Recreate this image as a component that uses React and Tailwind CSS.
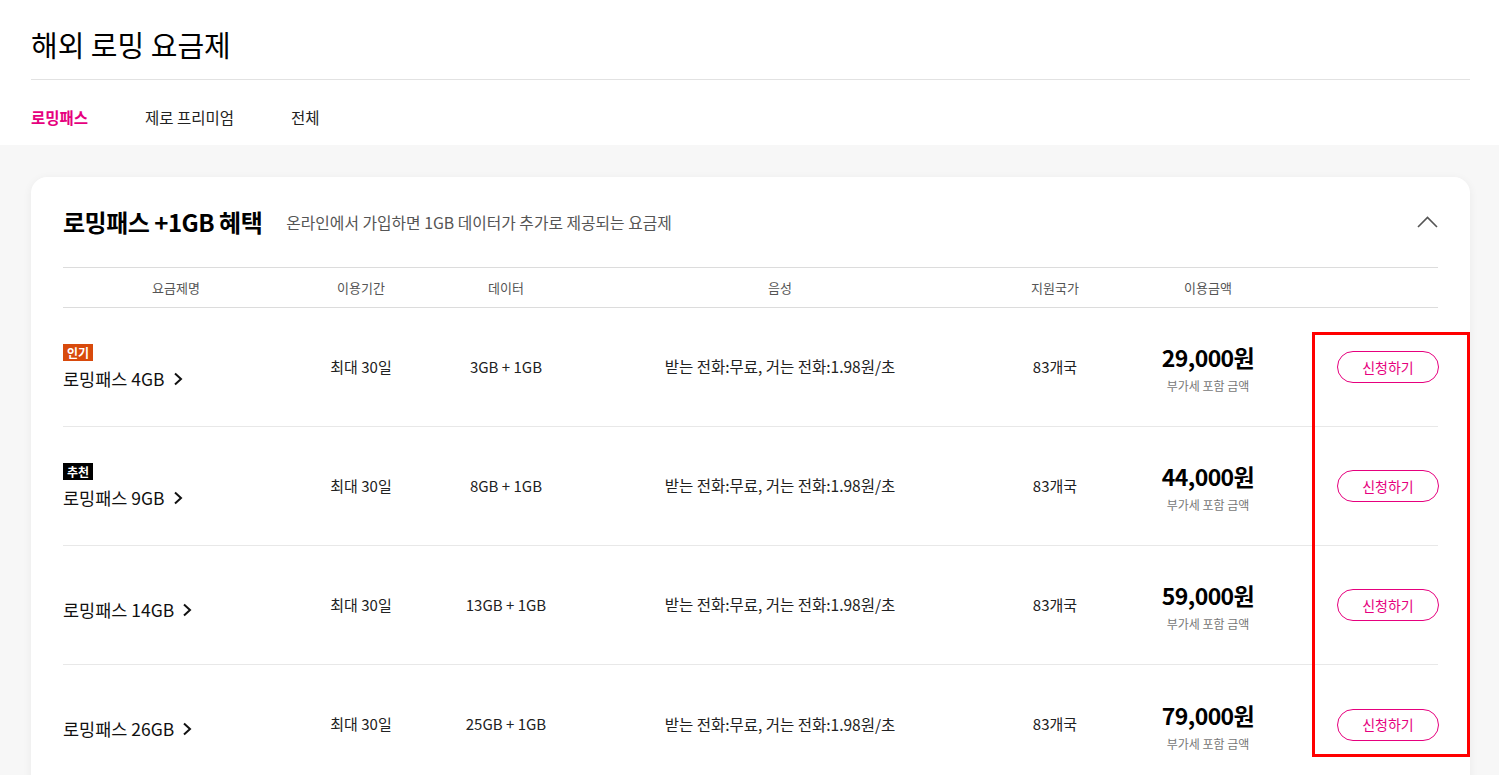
import React from "react";

const FONT = { fontFamily: '"Noto Sans CJK KR", "Noto Sans", sans-serif' };

const PLANS = [
  { name: "로밍패스 4GB", badge: "인기", data: "3GB + 1GB", price: "29,000원" },
  { name: "로밍패스 9GB", badge: "추천", data: "8GB + 1GB", price: "44,000원" },
  { name: "로밍패스 14GB", data: "13GB + 1GB", price: "59,000원" },
  { name: "로밍패스 26GB", data: "25GB + 1GB", price: "79,000원" },
];

const COLS = "grid grid-cols-[226px_144px_146px_402px_148px_158px_152px]";

function Badge({ label }) {
  const tone = label === "인기" ? "bg-[#d84a0c]" : "bg-black";
  return (
    <span className={`${tone} text-white text-[12px] font-bold leading-[17px] px-[4px] h-[17px] inline-block self-start`}>
      {label}
    </span>
  );
}

function Row({ p, last }) {
  return (
    <div className={`${COLS} h-[119px] items-center ${last ? "" : "border-b border-[#e8e8e8]"}`}>
      <div className="flex flex-col">
        {p.badge ? <Badge label={p.badge} /> : <div className="h-[2px]" />}
        <div className="flex items-center gap-[8px] mt-[7px] text-[17.5px] text-[#111] leading-[22px]">
          {p.name}
          <svg width="10" height="14" viewBox="0 0 10 14" fill="none">
            <path d="M2 1.5 8 7 2 12.5" stroke="#111" strokeWidth="2" />
          </svg>
        </div>
      </div>
      <div className="text-center text-[15px] text-[#222]">최대 30일</div>
      <div className="text-center text-[15px] text-[#222]">{p.data}</div>
      <div className="text-center text-[15.5px] text-[#222]">받는 전화:무료, 거는 전화:1.98원/초</div>
      <div className="text-center text-[15px] text-[#222]">83개국</div>
      <div className="flex flex-col items-center">
        <div className="text-[23px] font-bold text-black leading-[30px] tracking-[-0.6px] mt-[2px]">{p.price}</div>
        <div className="text-[12px] text-[#777] leading-[16px] mt-[6px]">부가세 포함 금액</div>
      </div>
      <div className="flex justify-end">
        <button className="w-[102px] h-[32px] rounded-full border border-[#e6007e] text-[#e6007e] text-[14px] bg-white">
          신청하기
        </button>
      </div>
    </div>
  );
}

export default function App() {
  return (
    <div className="min-h-[775px] bg-[#f7f7f7] relative overflow-hidden" style={FONT}>
      <div className="bg-white px-[31px]">
        <h1 className="h-[80px] pt-[24px] text-[29px] leading-[40px] text-black border-b border-[#e2e2e2] w-[1439px]">
          해외 로밍 요금제
        </h1>
        <div className="flex h-[65px] items-center pt-[10px] text-[15.5px]">
          <span className="text-[#e6007e] font-bold w-[114px]">로밍패스</span>
          <span className="text-[#222] w-[146px]">제로 프리미엄</span>
          <span className="text-[#222]">전체</span>
        </div>
      </div>

      <div className="mx-[31px] mt-[32px] w-[1439px] bg-white rounded-[16px] shadow-[0_2px_10px_rgba(0,0,0,0.06)] px-[32px] pb-[20px]">
        <div className="flex items-center h-[90px]">
          <h2 className="text-[24px] font-bold text-black tracking-[-0.5px]">로밍패스 +1GB 혜택</h2>
          <p className="ml-[24px] text-[15.8px] text-[#555] mt-[2px]">온라인에서 가입하면 1GB 데이터가 추가로 제공되는 요금제</p>
          <svg className="ml-auto" width="21" height="12" viewBox="0 0 21 12" fill="none">
            <path d="M1 11 10.5 1.5 20 11" stroke="#555" strokeWidth="1.6" />
          </svg>
        </div>
        <div className={`${COLS} h-[41px] items-center border-y border-[#dcdcdc] text-[13px] text-[#555] text-center`}>
          <div>요금제명</div>
          <div>이용기간</div>
          <div>데이터</div>
          <div>음성</div>
          <div>지원국가</div>
          <div>이용금액</div>
          <div />
        </div>
        {PLANS.map((p, i) => (
          <Row key={p.name} p={p} last={i === PLANS.length - 1} />
        ))}
      </div>

      <div className="absolute left-[1312px] top-[332px] w-[158px] h-[425px] border-[3px] border-[#ff0000] pointer-events-none" />
    </div>
  );
}
